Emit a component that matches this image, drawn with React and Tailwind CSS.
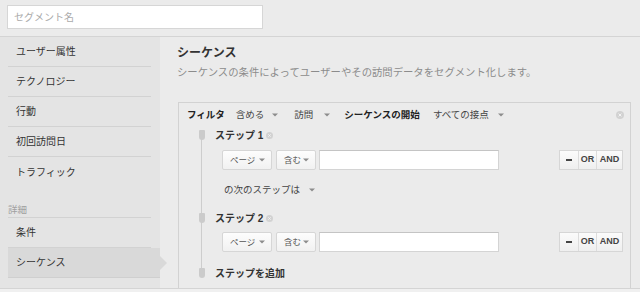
import React from "react";

const Caret = ({ className = "" }) => (
  <svg width="6" height="4" viewBox="0 0 6 4" className={className}>
    <path d="M0 0.5h6L3 3.5z" fill="#8c8c8c" />
  </svg>
);

const CloseDot = ({ size = 8 }) => (
  <svg width={size} height={size} viewBox="0 0 8 8">
    <circle cx="4" cy="4" r="4" fill="#d2d2d2" />
    <path d="M2.6 2.6l2.8 2.8M5.4 2.6L2.6 5.4" stroke="#f4f4f4" strokeWidth="1" />
  </svg>
);

const sideItems = ["ユーザー属性", "テクノロジー", "行動", "初回訪問日"];

function Select({ label, width }) {
  return (
    <div
      className={`${width} h-[20px] flex items-center justify-between pl-[7px] pr-[6px] bg-gradient-to-b from-[#fdfdfd] to-[#f1f1f1] border border-[#d6d6d6] rounded-[2px] text-[8.5px] text-[#555]`}
    >
      <span>{label}</span>
      <Caret />
    </div>
  );
}

function ConditionRow() {
  return (
    <div className="flex items-center pl-[43px] pr-[7px] h-[20px]">
      <Select label="ページ" width="w-[50px]" />
      <div className="ml-[4px]">
        <Select label="含む" width="w-[40px]" />
      </div>
      <div className="ml-[3px] w-[180px] h-[20px] bg-white border border-[#d4d4d4] border-t-[#c4c4c4]" />
      <div className="ml-auto flex h-[20px] border border-[#d6d6d6] bg-gradient-to-b from-[#fbfbfb] to-[#efefef] text-[9px] font-bold text-[#444] font-['Liberation_Sans',sans-serif]">
        <div className="w-[19px] flex items-center justify-center border-r border-[#dcdcdc]">
          <span className="block w-[6px] h-[1.5px] bg-[#444]" />
        </div>
        <div className="w-[18px] flex items-center justify-center border-r border-[#dcdcdc]">OR</div>
        <div className="w-[25px] flex items-center justify-center">AND</div>
      </div>
    </div>
  );
}

function StepLabel({ children, close }) {
  return (
    <div className="flex items-center h-[16px] pl-[20px]">
      <span className="w-[6px] h-[10px] bg-[#cbcbcb] rounded-b-[3px] rounded-t-[1px] relative z-10" />
      <span className="ml-[10px] text-[10px] font-bold text-[#333]">{children}</span>
      {close && (
        <span className="ml-[3px] flex">
          <CloseDot size={7} />
        </span>
      )}
    </div>
  );
}

export default function App() {
  return (
    <div className="w-[640px] h-[292px] overflow-hidden bg-[#f0f0f0] font-['Liberation_Sans','Noto_Sans_CJK_JP',sans-serif] text-[#333]">
      {/* top bar */}
      <div className="h-[37px] bg-[#ebebeb] border-b border-[#d4d4d4] pl-[7px] pt-[5px]">
        <div className="w-[256px] h-[24px] bg-white border border-[#d6d6d6] flex items-center pl-[6px] text-[10px] text-[#aaa]">
          セグメント名
        </div>
      </div>

      <div className="flex h-[252px] border-b border-[#d4d4d4]">
        {/* sidebar */}
        <div className="w-[160px] bg-[#e4e4e4] pl-[8px] shrink-0">
          {sideItems.map((item) => (
            <div
              key={item}
              className="w-[143px] h-[30px] flex items-center pl-[8px] border-b border-[#d2d2d2] text-[10px] text-[#333]"
            >
              {item}
            </div>
          ))}
          <div className="w-[143px] h-[30px] flex items-center pl-[8px] text-[10px] text-[#333]">
            トラフィック
          </div>
          <div className="w-[143px] h-[31px] flex items-end pb-[1px] border-b border-[#d2d2d2] text-[9.5px] text-[#a0a0a0] leading-[13px]">
            詳細
          </div>
          <div className="w-[143px] h-[30px] flex items-center pl-[8px] border-b border-[#d2d2d2] text-[10px] text-[#333]">
            条件
          </div>
          <div className="relative w-[152px] h-[30px] flex items-center pl-[8px] bg-[#d9d9d9] border-b border-[#cfcfcf] text-[10px] text-[#333]">
            シーケンス
            <span className="absolute left-full top-[8px] w-0 h-0 border-y-[7px] border-y-transparent border-l-[7px] border-l-[#d9d9d9]" />
          </div>
        </div>

        {/* main */}
        <div className="flex-1 flex flex-col bg-[#ebebeb] pl-[18px] pr-[9px]">
          <div className="pt-[6px] -ml-[1px] text-[12px] leading-[20px] font-bold text-[#333]">
            シーケンス
          </div>
          <div className="mt-[2px] -ml-[1px] text-[10.35px] leading-[16px] text-[#8c8c8c]">
            シーケンスの条件によってユーザーやその訪問データをセグメント化します。
          </div>

          <div className="mt-[21px] flex-1 border-t border-x border-[#d2d2d2]">
            {/* filter header */}
            <div className="h-[24px] flex items-center pl-[8px] pr-[6px] text-[9.5px]">
              <span className="font-bold text-[#222]">フィルタ</span>
              <span className="ml-[11px] text-[#444]">含める</span>
              <Caret className="ml-[8px]" />
              <span className="ml-[16px] text-[#444]">訪問</span>
              <Caret className="ml-[11px]" />
              <span className="ml-[14px] font-bold text-[#222]">シーケンスの開始</span>
              <span className="ml-[13px] text-[#444]">すべての接点</span>
              <Caret className="ml-[9px]" />
              <span className="ml-auto flex">
                <CloseDot size={8} />
              </span>
            </div>

            {/* steps */}
            <div className="relative">
              <span className="absolute left-[22px] top-[12px] bottom-[12px] w-px bg-[#cdcdcd]" />
              <StepLabel close>ステップ 1</StepLabel>
              <div className="mt-[7px]">
                <ConditionRow />
              </div>
              <div className="mt-[12px] h-[16px] flex items-center pl-[45px] text-[9.5px] text-[#444]">
                の次のステップは
                <Caret className="ml-[9px]" />
              </div>
              <div className="mt-[12px]">
                <StepLabel close>ステップ 2</StepLabel>
              </div>
              <div className="mt-[6px]">
                <ConditionRow />
              </div>
              <div className="mt-[13px]">
                <StepLabel>ステップを追加</StepLabel>
              </div>
            </div>
          </div>
        </div>
      </div>
    </div>
  );
}
